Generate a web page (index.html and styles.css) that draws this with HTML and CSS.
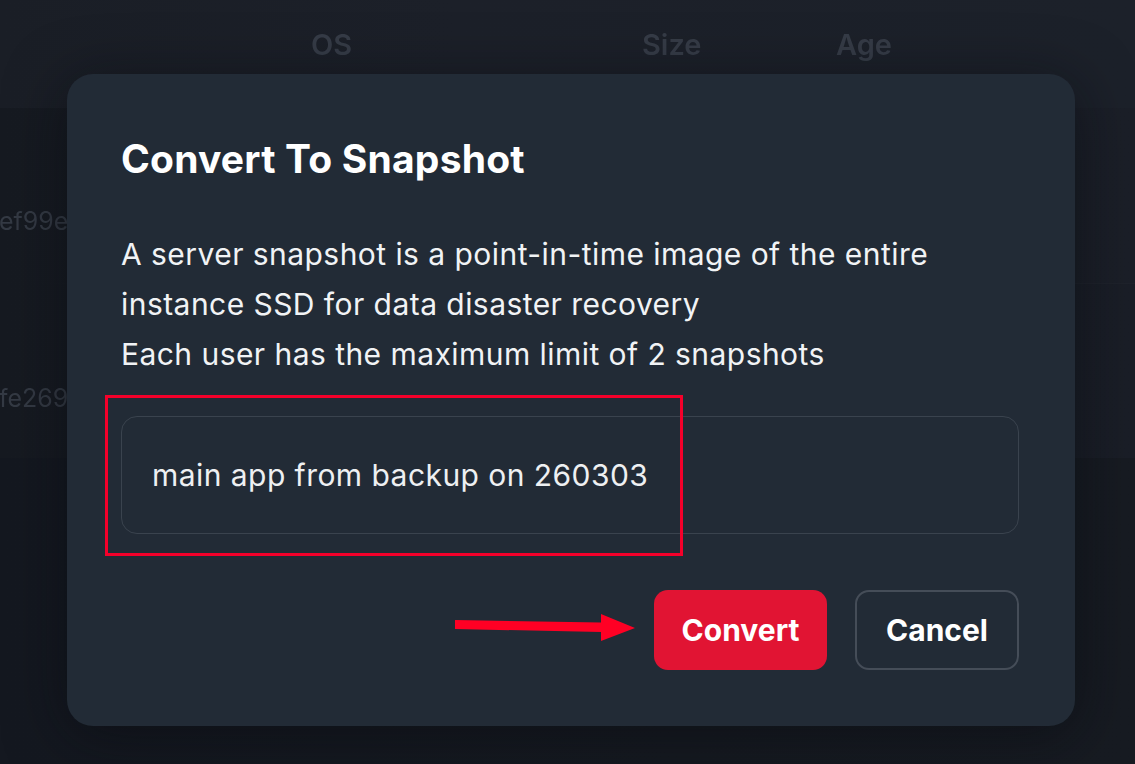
FILE: index.html
```html
<!DOCTYPE html>
<html lang="en">
<head>
<meta charset="utf-8">
<title>Convert To Snapshot</title>
<link rel="stylesheet" href="styles.css">
</head>
<body>
<div class="page">
  <div class="table-head">
    <span class="col col-os">OS</span>
    <span class="col col-size">Size</span>
    <span class="col col-age">Age</span>
  </div>
  <div class="rows">
    <div class="row row-a"><span class="hash">ef99e</span></div>
    <div class="row row-b"><span class="hash">fe269</span></div>
  </div>
  <div class="rows-rest"></div>
</div>

<div class="modal">
  <h2 class="modal-title">Convert To Snapshot</h2>
  <p class="modal-text">A server snapshot is a point-in-time image of the entire<br>instance SSD for data disaster recovery<br>Each user has the maximum limit of 2 snapshots</p>
  <div class="field">main app from backup on 260303</div>
  <div class="actions">
    <button class="btn btn-primary">Convert</button>
    <button class="btn btn-outline">Cancel</button>
  </div>
</div>

<div class="mark-box"></div>
<svg class="mark-arrow" width="190" height="30" viewBox="0 0 190 30">
  <polygon points="0,6 146,8.5 146,0 180,14 146,27 146,18 0,15" fill="#ff0024"/>
</svg>
</body>
</html>
```
FILE: styles.css
```css
* { box-sizing: border-box; }
html, body { margin: 0; padding: 0; }
body {
  width: 1135px;
  height: 764px;
  overflow: hidden;
  background: #161a21;
  font-family: Inter, "Noto Sans", sans-serif;
  position: relative;
}
.page {
  display: flex;
  flex-direction: column;
  height: 100%;
}
.table-head {
  height: 108px;
  background: linear-gradient(90deg, #1a1e26 0%, #1c2029 40%, #1c212a 100%);
  position: relative;
  filter: blur(0.4px);
}
.col {
  font-size: 29px;
  font-weight: 600;
  color: #363c47;
  position: absolute;
  top: 27px;
}
.col-os { left: 311px; }
.col-size { left: 642px; }
.col-age { left: 836px; }
.rows {
  display: flex;
  flex-direction: column;
  height: 350px;
}
.row {
  display: flex;
  align-items: flex-start;
}
.row-a {
  height: 175px;
  padding-top: 98px;
  background: linear-gradient(90deg, #161a21 0%, #191d25 50%, #1b1f28 100%);
}
.row-b {
  height: 175px;
  padding-top: 99px;
  background: linear-gradient(90deg, #161a21 0%, #181c24 50%, #1a1e27 100%);
  border-top: 1px solid;
  border-image: linear-gradient(90deg, rgba(30,34,43,0) 0%, #1e222b 80%) 1;
}
.hash {
  font-size: 25px;
  line-height: 30px;
  color: #343a44;
  margin-left: -1px;
  filter: blur(0.4px);
}
.rows-rest {
  flex: 1;
  background: linear-gradient(90deg, #141820 0%, #161a21 60%, #171b22 100%);
}

.modal {
  position: absolute;
  left: 67px;
  top: 74px;
  width: 1008px;
  height: 652px;
  background: #222b36;
  border-radius: 26px;
  padding: 61px 56px 56px 54px;
  display: flex;
  flex-direction: column;
  box-shadow: 0 10px 60px rgba(8, 10, 14, 0.55);
}
.modal-title {
  margin: 0;
  font-size: 39px;
  line-height: 48px;
  font-weight: 700;
  color: #ffffff;
  letter-spacing: 0.2px;
}
.modal-text {
  margin: 46px 0 0 0;
  font-size: 30px;
  line-height: 50px;
  color: #f1f3f5;
  font-weight: 400;
  letter-spacing: 0.45px;
}
.field {
  margin-top: 37px;
  height: 118px;
  border: 1.5px solid #3a434e;
  border-radius: 16px;
  display: flex;
  align-items: center;
  padding-left: 30px;
  font-size: 30px;
  letter-spacing: 0.45px;
  color: #eef0f2;
}
.actions {
  margin-top: 56px;
  display: flex;
  justify-content: flex-end;
  gap: 28px;
}
.btn {
  height: 80px;
  border-radius: 14px;
  font-family: Inter, "Noto Sans", sans-serif;
  font-size: 30px;
  font-weight: 700;
  color: #ffffff;
  padding: 0;
  cursor: pointer;
}
.btn-primary {
  width: 173px;
  background: #e11433;
  border: none;
}
.btn-outline {
  width: 164px;
  background: transparent;
  border: 2px solid #454d58;
}

.mark-box {
  position: absolute;
  left: 105px;
  top: 395px;
  width: 578px;
  height: 161px;
  border: 3px solid #f5002a;
}
.mark-arrow {
  position: absolute;
  left: 455px;
  top: 614px;
}
```
